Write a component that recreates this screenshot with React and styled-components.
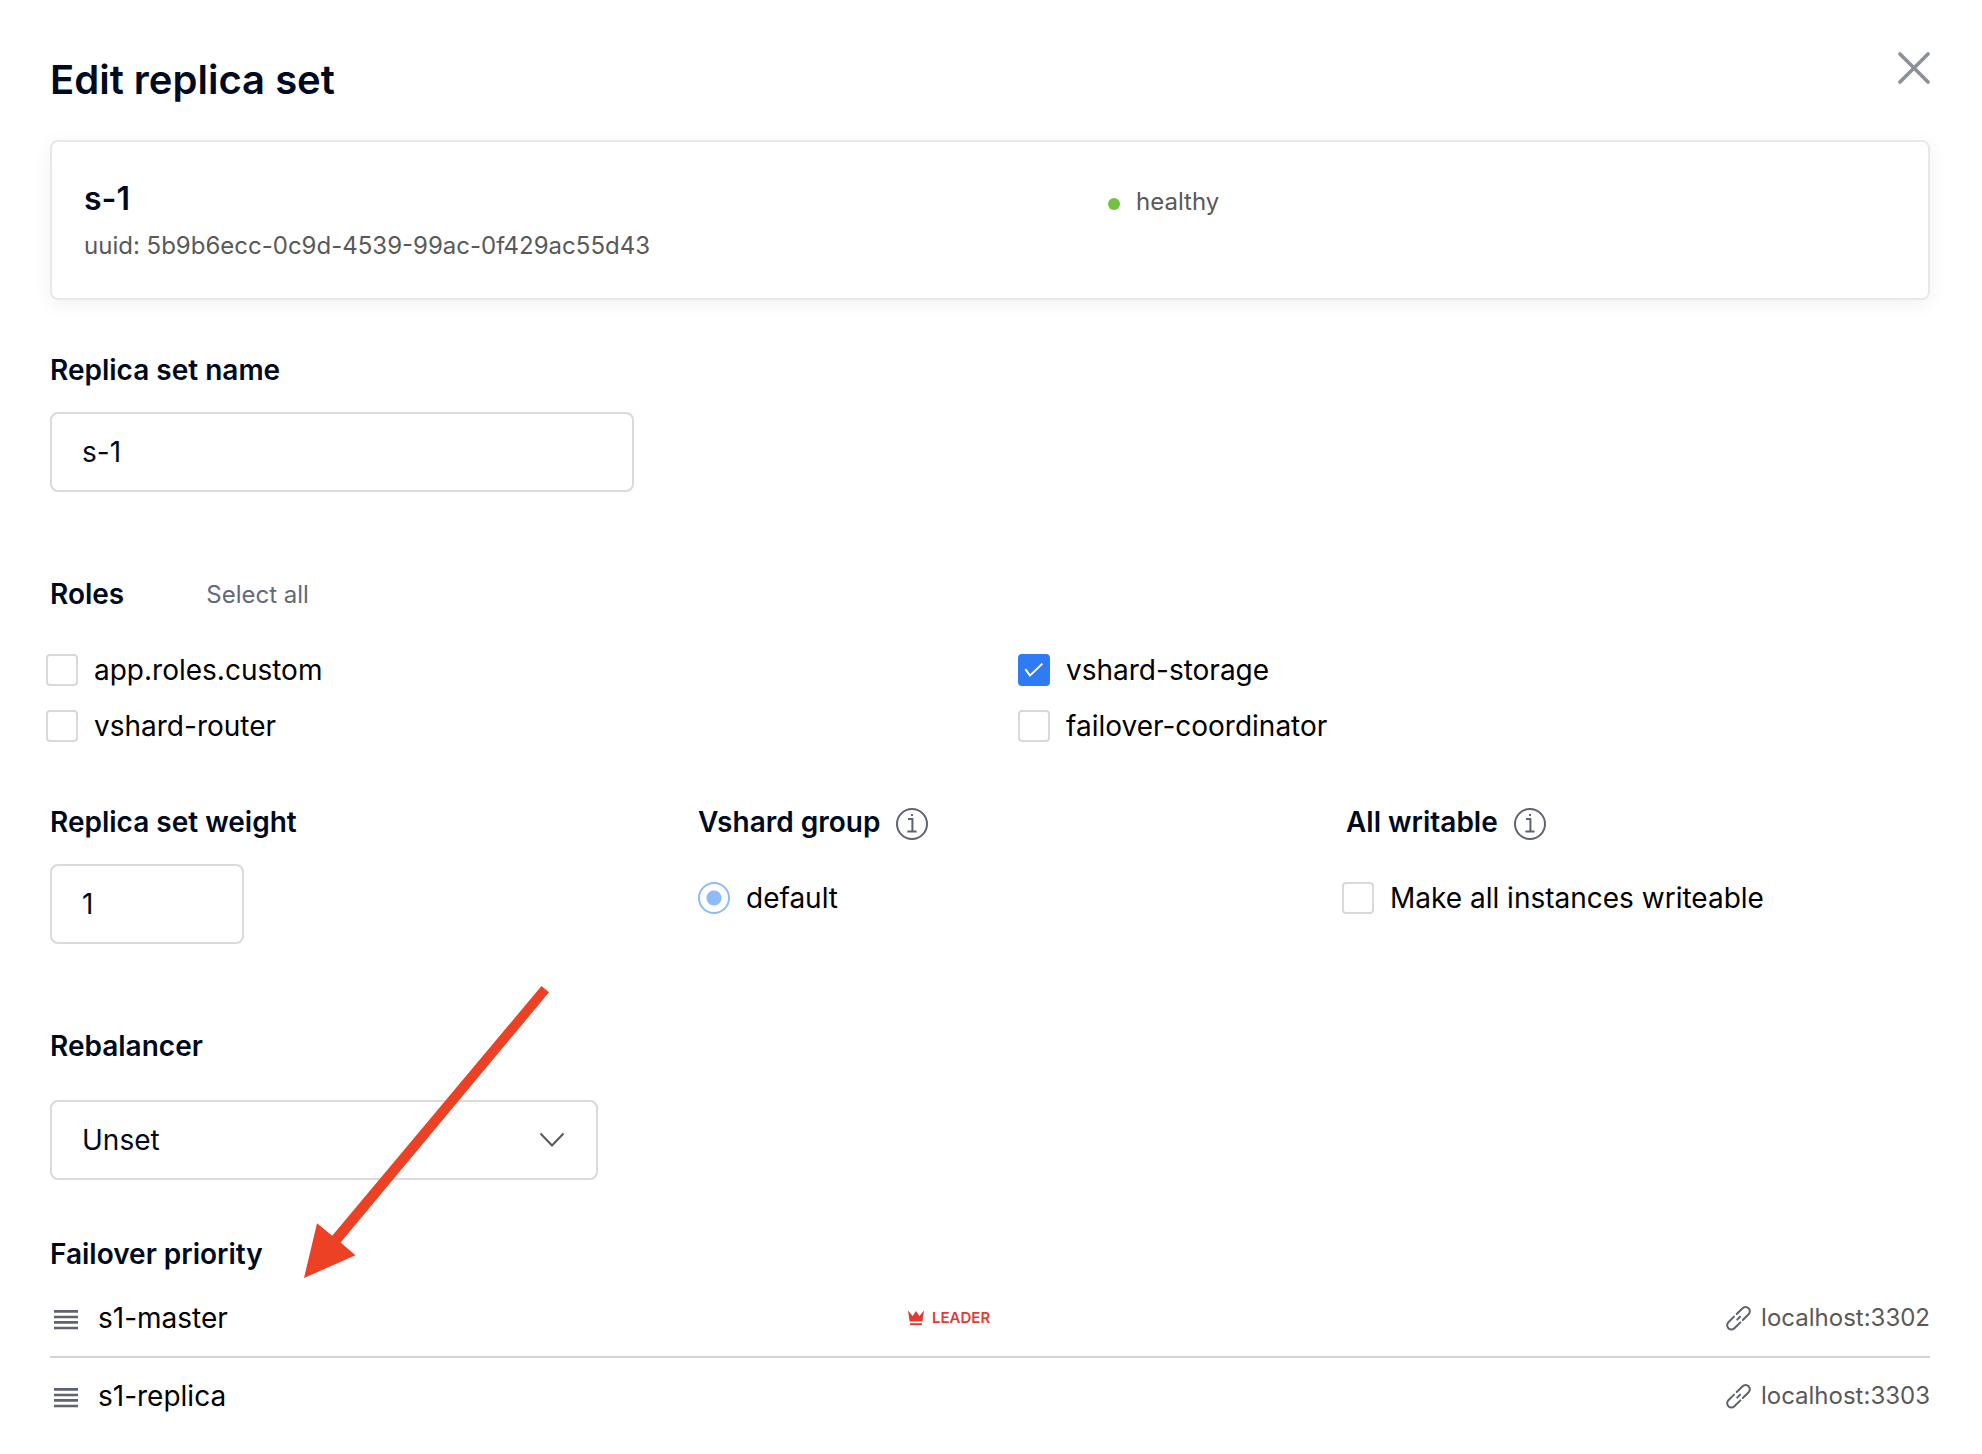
import React, { useState } from "react";
import styled, { createGlobalStyle } from "styled-components";

const GlobalStyle = createGlobalStyle`
  *, *::before, *::after { box-sizing: border-box; }
  body {
    margin: 0;
    background: #fff;
    color: #000;
    font-family: Inter, "Liberation Sans", sans-serif;
    font-size: 28px;
    line-height: 44px;
  }
  button, input, select { font: inherit; color: inherit; margin: 0; }
`;

const Dialog = styled.main`
  position: relative;
  padding: 46px 52px 0 50px;
`;

const Header = styled.header`
  display: flex;
  justify-content: space-between;
  align-items: flex-start;
  height: 94px;
`;

const Title = styled.h1`
  margin: 8px 0 0;
  color: #000a1f;
  font-size: 40px;
  font-weight: 600;
  line-height: 52px;
`;

const CloseButton = styled.button`
  display: flex;
  padding: 4px 0;
  border: 0;
  background: none;
  color: #8b8f98;
  cursor: pointer;
`;

const Columns = styled.div`
  display: grid;
  grid-template-columns: repeat(${(p) => p.$count}, minmax(0, 1fr));
  column-gap: 64px;
`;

const Card = styled.section`
  display: grid;
  grid-template-columns: 1024px 1fr;
  height: 160px;
  padding: 32px;
  border: 2px solid #e8e8e8;
  border-radius: 8px;
  box-shadow: 0 4px 20px rgba(0, 0, 0, 0.06);
`;

const SetName = styled.h2`
  margin: 0;
  color: #000a1f;
  font-size: 32px;
  font-weight: 600;
  line-height: 50px;
`;

const Muted = styled.div`
  color: #595959;
  font-size: 24px;
  line-height: 44px;
`;

const Status = styled(Muted)`
  display: flex;
  align-items: center;
  gap: 16px;
  line-height: 56px;
`;

const Dot = styled.span`
  width: 12px;
  height: 12px;
  margin-top: 4px;
  border-radius: 50%;
  background: #73c140;
`;

const Section = styled.section`
  margin-top: ${(p) => p.$top}px;
`;

const LabelRow = styled.div`
  display: flex;
  align-items: center;
  gap: 16px;
  height: 44px;
`;

const Label = styled.label`
  color: #000a1f;
  font-weight: 600;
`;

const InfoButton = styled.button`
  display: flex;
  padding: 4px 0 0;
  border: 0;
  background: none;
  color: #5f6270;
  cursor: help;
`;

const TextInput = styled.input`
  display: block;
  width: ${(p) => p.$width};
  height: 80px;
  margin-top: 20px;
  padding: 0 30px;
  border: 2px solid #d9d9de;
  border-radius: 8px;
  background: #fff;
  color: #000a1f;
  outline: 0;
`;

const SelectAll = styled.button`
  margin-left: 66px;
  padding: 2px 0 0;
  border: 0;
  background: none;
  color: #64687a;
  font-size: 24px;
  cursor: pointer;
`;

const Choice = styled.label`
  display: flex;
  align-items: center;
  gap: 16px;
  height: 56px;
  margin-left: ${(p) => (p.$outdent ? "-4px" : "0")};
`;

const CheckSlot = styled.span`
  display: grid;
  width: 32px;
  height: 32px;
  color: #fff;

  & > * { grid-area: 1 / 1; }
  & > svg { place-self: center; pointer-events: none; }
`;

const Checkbox = styled.input`
  appearance: none;
  width: 32px;
  height: 32px;
  border: 2px solid #d9d9d9;
  border-radius: 4px;
  background: #fff;

  &:checked {
    border-color: #2f7bf6;
    background: #2f7bf6;
  }
`;

const Radio = styled.input`
  appearance: none;
  width: 32px;
  height: 32px;
  border: 2px solid #8cbcfb;
  border-radius: 50%;
  background: radial-gradient(circle, #8cbcfb 7px, #fff 8px);
`;

const SelectBox = styled.div`
  display: grid;
  align-items: center;
  width: 548px;
  height: 80px;
  margin-top: 32px;
  color: #595959;

  & > * { grid-area: 1 / 1; }
  & > svg { justify-self: end; margin-right: 32px; pointer-events: none; }
`;

const Select = styled.select`
  appearance: none;
  width: 100%;
  height: 80px;
  padding: 0 80px 0 30px;
  border: 2px solid #d9d9de;
  border-radius: 8px;
  background: #fff;
  color: #000a1f;
`;

const Servers = styled.ul`
  margin: 4px 0 0;
  padding: 0;
  list-style: none;
`;

const Server = styled.li`
  display: grid;
  grid-template-columns: 858px 1fr auto;
  align-items: center;
  height: 78px;
  border-bottom: 2px solid #d2d2d2;

  &:last-child { border-bottom-color: transparent; }
`;

const ServerName = styled.div`
  display: flex;
  align-items: center;
  gap: 16px;
  color: #000;
`;

const Handle = styled.button`
  display: flex;
  padding: 4px 0 0;
  border: 0;
  background: none;
  color: #5f6270;
  cursor: grab;
`;

const Leader = styled.div`
  display: flex;
  align-items: center;
  gap: 8px;
  color: #e53935;
  font-size: 15px;
  font-weight: 600;
  line-height: 24px;
`;

const Address = styled(Muted)`
  display: flex;
  align-items: center;
  gap: 8px;

  & > svg { color: #5f6270; }
`;

const Pointer = styled.svg`
  position: absolute;
  left: 304px;
  top: 986px;
  pointer-events: none;
`;

const CloseIcon = () => (
  <svg width="36" height="36" viewBox="0 0 36 36" fill="none" stroke="currentColor" strokeWidth="3.6" strokeLinecap="round">
    <path d="M6 4 34 32M34 4 6 32" />
  </svg>
);

const InfoIcon = () => (
  <svg width="32" height="32" viewBox="0 0 32 32" fill="none" stroke="currentColor" strokeWidth="2">
    <circle cx="16" cy="16" r="15" />
    <path d="M12 11h4.4v12.6M11.4 23.4h9.2" />
    <path d="M15 6h2v2h-2z" fill="currentColor" stroke="none" />
  </svg>
);

const TickIcon = () => (
  <svg width="20" height="16" viewBox="0 0 20 16" fill="none" stroke="currentColor" strokeWidth="2">
    <path d="M1.4 7.2 6 13.6 18.4 1.6" />
  </svg>
);

const ChevronIcon = () => (
  <svg width="28" height="16" viewBox="0 0 28 16" fill="none" stroke="currentColor" strokeWidth="2">
    <path d="M2.5 1.5 14 13.5 25.5 1.5" />
  </svg>
);

const HandleIcon = () => (
  <svg width="32" height="20" viewBox="0 0 32 20" fill="none" stroke="currentColor" strokeWidth="2.6">
    <path d="M4 1.4h24M4 7h24M4 12.4h24M4 18h24" />
  </svg>
);

const CrownIcon = () => (
  <svg width="16" height="16" viewBox="0 0 16 16" fill="currentColor">
    <path d="M0 .5 4.6 6 8 1 11.4 6 16 .5 14.4 11.5H1.6Z" />
    <path d="M2 13.2h12v2H2z" />
  </svg>
);

const LinkIcon = () => (
  <svg width="28" height="28" viewBox="0 0 28 28" fill="none" stroke="currentColor" strokeWidth="2" strokeLinecap="round">
    <path d="M11.7 10 17.6 4.2a4.2 4.2 0 0 1 6 6L17.8 16M9 12.6 3.4 18.2a4.2 4.2 0 0 0 6 6L15.4 18.4M12.2 15.6 15 12.8" />
  </svg>
);

const Check = ({ label, outdent = true, initial = false }) => {
  const [checked, setChecked] = useState(initial);
  return (
    <Choice $outdent={outdent}>
      <CheckSlot>
        <Checkbox type="checkbox" checked={checked} onChange={() => setChecked(!checked)} />
        {checked && <TickIcon />}
      </CheckSlot>
      {label}
    </Choice>
  );
};

const servers = [
  { name: "s1-master", address: "localhost:3302", leader: true },
  { name: "s1-replica", address: "localhost:3303", leader: false },
];

export default function App() {
  return (
    <Dialog>
      <GlobalStyle />
      <Header>
        <Title>Edit replica set</Title>
        <CloseButton type="button" aria-label="Close">
          <CloseIcon />
        </CloseButton>
      </Header>

      <Card>
        <div>
          <SetName>s-1</SetName>
          <Muted>uuid: 5b9b6ecc-0c9d-4539-99ac-0f429ac55d43</Muted>
        </div>
        <div>
          <Status>
            <Dot />
            healthy
          </Status>
        </div>
      </Card>

      <Section $top={48}>
        <Columns $count={3}>
          <div>
            <LabelRow>
              <Label htmlFor="set-name">Replica set name</Label>
            </LabelRow>
            <TextInput id="set-name" $width="100%" defaultValue="s-1" />
          </div>
        </Columns>
      </Section>

      <Section $top={80}>
        <LabelRow>
          <Label as="span">Roles</Label>
          <SelectAll type="button">Select all</SelectAll>
        </LabelRow>
        <Section $top={26}>
          <Columns $count={2}>
            <Check label="app.roles.custom" />
            <Check label="vshard-storage" initial />
            <Check label="vshard-router" />
            <Check label="failover-coordinator" />
          </Columns>
        </Section>
      </Section>

      <Section $top={46}>
        <Columns $count={3}>
          <div>
            <LabelRow>
              <Label htmlFor="weight">Replica set weight</Label>
            </LabelRow>
            <TextInput id="weight" $width="194px" defaultValue="1" />
          </div>
          <div>
            <LabelRow>
              <Label as="span">Vshard group</Label>
              <InfoButton type="button" aria-label="About vshard group">
                <InfoIcon />
              </InfoButton>
            </LabelRow>
            <Section $top={26}>
              <Choice>
                <Radio type="radio" name="group" defaultChecked />
                default
              </Choice>
            </Section>
          </div>
          <div>
            <LabelRow>
              <Label as="span">All writable</Label>
              <InfoButton type="button" aria-label="About all writable">
                <InfoIcon />
              </InfoButton>
            </LabelRow>
            <Section $top={26}>
              <Check label="Make all instances writeable" />
            </Section>
          </div>
        </Columns>
      </Section>

      <Section $top={80}>
        <LabelRow>
          <Label htmlFor="rebalancer">Rebalancer</Label>
        </LabelRow>
        <SelectBox>
          <Select id="rebalancer" defaultValue="Unset">
            <option>Unset</option>
          </Select>
          <ChevronIcon />
        </SelectBox>
      </Section>

      <Section $top={52}>
        <LabelRow>
          <Label as="span">Failover priority</Label>
        </LabelRow>
        <Servers>
          {servers.map((s) => (
            <Server key={s.name}>
              <ServerName>
                <Handle type="button" aria-label={"Move " + s.name}>
                  <HandleIcon />
                </Handle>
                {s.name}
              </ServerName>
              <div>
                {s.leader && (
                  <Leader>
                    <CrownIcon />
                    LEADER
                  </Leader>
                )}
              </div>
              <Address>
                <LinkIcon />
                {s.address}
              </Address>
            </Server>
          ))}
        </Servers>
      </Section>

      <Pointer width="246" height="292" viewBox="0 0 246 292" fill="#ed4126" aria-hidden="true">
        <path d="M237.5 0 245 6.3 36.6 256.5 51.5 269.3 0 292 13 237.3 28.2 249.7Z" />
      </Pointer>
    </Dialog>
  );
}
